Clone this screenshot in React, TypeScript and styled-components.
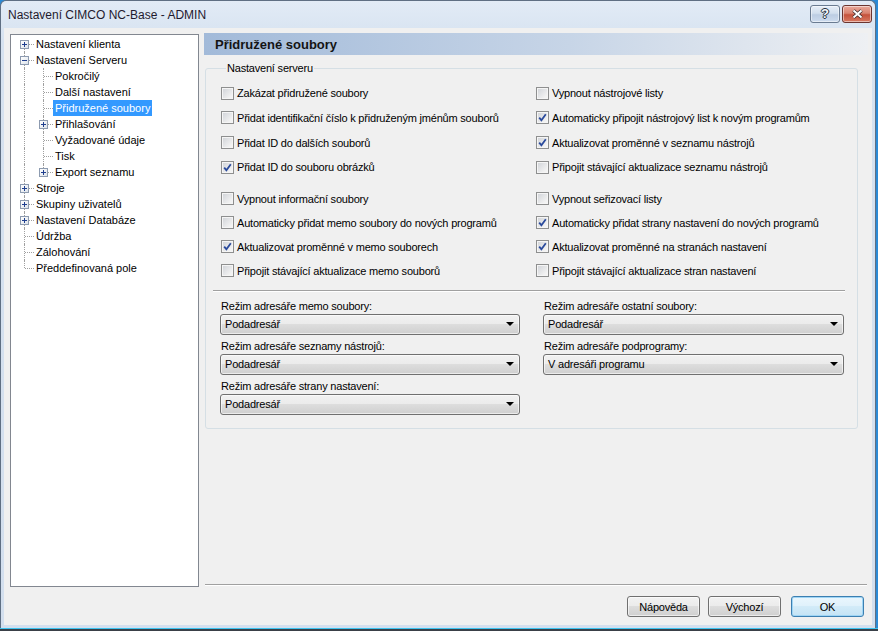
import React from 'react';
import styled, { createGlobalStyle, css } from 'styled-components';

const GlobalStyle = createGlobalStyle`
  html, body { margin: 0; padding: 0; }
  body {
    font-family: "Liberation Sans", Arial, sans-serif;
    font-size: 11px;
    background: #2b8ad6;
    overflow: hidden;
  }
`;

const Desktop = styled.div`
  width: 878px;
  height: 631px;
  display: flex;
  flex-direction: column;
`;

const Window = styled.div`
  width: 876px;
  height: 628px;
  box-sizing: border-box;
  display: flex;
  flex-direction: column;
  background: linear-gradient(to bottom, #e2ebf6, #d6e2f0 40px, #d3dfee);
  border: 1px solid #5f6f83;
  border-bottom: none;
  border-radius: 6px 6px 0 0;
  padding: 0 3px 3px 3px;
`;

const Taskbar = styled.div`
  height: 3px;
  width: 878px;
  box-sizing: border-box;
  border-top: 1px solid #3cc3ef;
  background: #3a4048;
`;

const TitleBar = styled.div`
  height: 27px;
  display: flex;
  align-items: center;
  padding-left: 4px;
  font-size: 12px;
  color: #1f1a2e;
`;

const TitleText = styled.div`
  flex: 1;
`;

const CaptionButton = styled.div<{ $close?: boolean }>`
  width: 30px;
  height: 18px;
  box-sizing: border-box;
  border: 1px solid ${p => (p.$close ? '#6b3530' : '#6a7b91')};
  border-radius: 3px;
  display: flex;
  align-items: center;
  justify-content: center;
  margin-left: 2px;
  margin-top: -2px;
  box-shadow: inset 0 0 0 1px rgba(255, 255, 255, 0.5);
  background: ${p =>
    p.$close
      ? 'linear-gradient(to bottom, #e9a99b 0%, #d98370 45%, #c5523c 55%, #d77a62 100%)'
      : 'linear-gradient(to bottom, #e6eef8 0%, #d2dfee 45%, #bccde3 55%, #cddbee 100%)'};
  font-weight: bold;
  font-size: 13px;
  color: #f7f9fc;
  text-shadow: 0 0 1px #2a3340, 1px 0 0 #2a3340, -1px 0 0 #2a3340, 0 1px 0 #2a3340, 0 -1px 0 #2a3340;
`;

const Body = styled.div`
  flex: 1;
  display: flex;
  background: #f0f0f0;
  padding: 5px 4px 8px 6px;
  gap: 5px;
  min-height: 0;
`;

const Tree = styled.div`
  width: 189px;
  box-sizing: border-box;
  margin-top: 1px;
  margin-bottom: 30px;
  background: #fff;
  border: 1px solid #828790;
  padding: 1px 0 0 4px;
  color: #000;
`;

const TreeRow = styled.div`
  display: flex;
  height: 16px;
  align-items: center;
`;

type VLine = 'full' | 'top' | 'bottom' | 'none';

const TreeCell = styled.div<{ $v: VLine; $h?: boolean }>`
  position: relative;
  width: 19px;
  height: 16px;
  flex: none;
  ${p =>
    p.$v !== 'none' &&
    css`
      &::before {
        content: '';
        position: absolute;
        left: 9px;
        top: ${p.$v === 'bottom' ? '8px' : '0'};
        height: ${p.$v === 'full' ? '16px' : '8px'};
        border-left: 1px dotted #a0a0a0;
      }
    `}
  ${p =>
    p.$h &&
    css`
      &::after {
        content: '';
        position: absolute;
        left: 10px;
        top: 8px;
        width: 9px;
        border-top: 1px dotted #a0a0a0;
      }
    `}
`;

const Expander = styled.div`
  position: absolute;
  left: 5px;
  top: 4px;
  width: 9px;
  height: 9px;
  box-sizing: border-box;
  border: 1px solid #8d9bb0;
  background: linear-gradient(135deg, #ffffff, #dde3ea);
  z-index: 1;
  display: flex;
  align-items: center;
  justify-content: center;
`;

const TreeLabel = styled.span<{ $selected?: boolean }>`
  line-height: 16px;
  padding: 0 2px;
  white-space: nowrap;
  ${p =>
    p.$selected &&
    css`
      background: #3399ff;
      color: #fff;
    `}
`;

const RightColumn = styled.div`
  flex: 1;
  display: flex;
  flex-direction: column;
  min-width: 0;
  letter-spacing: -0.2px;
`;

const Header = styled.div`
  height: 22px;
  display: flex;
  align-items: center;
  padding-left: 11px;
  background: linear-gradient(to right, #a2bad9, #c7d5e7 55%, #eef0f3);
  font-weight: bold;
  font-size: 13px;
  letter-spacing: 0;
  color: #141414;
`;

const Group = styled.fieldset`
  margin: 7px 10px 0 1px;
  padding: 6px 12px 13px 15px;
  border: 1px solid #d5dfe5;
  border-radius: 3px;
  min-width: 0;
`;

const Legend = styled.legend`
  padding: 0 1px;
  margin-left: 5px;
  line-height: 13px;
  color: #000;
`;

const CheckSection = styled.div<{ $rowH: number; $top: number }>`
  display: grid;
  grid-template-columns: 315px 1fr;
  grid-auto-rows: ${p => p.$rowH}px;
  margin-top: ${p => p.$top}px;
`;

const CheckItem = styled.label`
  display: flex;
  align-items: center;
  gap: 3px;
  white-space: nowrap;
  color: #000;
`;

const Box = styled.span`
  width: 13px;
  height: 13px;
  box-sizing: border-box;
  flex: none;
  border: 1px solid #8e8f8f;
  background: linear-gradient(135deg, #cfd2d7, #f3f3f3 80%);
  box-shadow: inset 0 0 0 1px #f5f5f5;
  display: flex;
  align-items: center;
  justify-content: center;
`;

const Separator = styled.div`
  height: 1px;
  background: #a0a0a0;
  border-bottom: 1px solid #fff;
`;

const GroupSeparator = styled(Separator)`
  margin: 7px 0 0 -8px;
`;

const FieldGrid = styled.div`
  display: grid;
  grid-template-columns: 300px 301px;
  column-gap: 23px;
  margin: 8px 0 0 -1px;
`;

const FieldColumn = styled.div`
  display: flex;
  flex-direction: column;
  gap: 5px;
`;

const Field = styled.div`
  display: flex;
  flex-direction: column;
  gap: 1px;
`;

const FieldLabel = styled.div`
  line-height: 13px;
  padding-left: 1px;
  color: #000;
`;

const buttonFace = css`
  box-sizing: border-box;
  border: 1px solid #707070;
  border-radius: 3px;
  background: linear-gradient(to bottom, #f2f2f2 0%, #ebebeb 49%, #dddddd 50%, #cfcfcf 100%);
  box-shadow: inset 0 0 0 1px rgba(255, 255, 255, 0.6);
`;

const Select = styled.div`
  ${buttonFace};
  height: 21px;
  display: flex;
  align-items: center;
  justify-content: space-between;
  padding: 0 5px 0 4px;
  color: #000;
`;

const Arrow = styled.span`
  width: 0;
  height: 0;
  border-left: 4px solid transparent;
  border-right: 4px solid transparent;
  border-top: 4px solid #000;
`;

const Spacer = styled.div`
  flex: 1;
`;

const BottomSeparator = styled(Separator)`
  margin: 0 1px;
`;

const ButtonRow = styled.div`
  display: flex;
  justify-content: flex-end;
  gap: 8px;
  margin: 10px 4px 0 0;
`;

const Button = styled.div<{ $default?: boolean }>`
  ${buttonFace};
  width: 73px;
  height: 21px;
  display: flex;
  align-items: center;
  justify-content: center;
  color: #000;
  ${p =>
    p.$default &&
    css`
      margin-left: 2px;
      border-color: #3c7fb1;
      background: linear-gradient(to bottom, #eaf6fd 0%, #dff1fb 49%, #d2ebf8 50%, #c4e3f5 100%);
      box-shadow: inset 0 0 0 1px #9fd5f5;
    `}
`;

type Node = {
  label: string;
  cells: { v: VLine; h?: boolean; exp?: 'plus' | 'minus' }[];
  selected?: boolean;
};

const tree: Node[] = [
  { label: 'Nastavení klienta', cells: [{ v: 'bottom', h: true, exp: 'plus' }] },
  { label: 'Nastavení Serveru', cells: [{ v: 'full', h: true, exp: 'minus' }] },
  { label: 'Pokročilý', cells: [{ v: 'full' }, { v: 'full', h: true }] },
  { label: 'Další nastavení', cells: [{ v: 'full' }, { v: 'full', h: true }] },
  { label: 'Přidružené soubory', cells: [{ v: 'full' }, { v: 'full', h: true }], selected: true },
  { label: 'Přihlašování', cells: [{ v: 'full' }, { v: 'full', h: true, exp: 'plus' }] },
  { label: 'Vyžadované údaje', cells: [{ v: 'full' }, { v: 'full', h: true }] },
  { label: 'Tisk', cells: [{ v: 'full' }, { v: 'full', h: true }] },
  { label: 'Export seznamu', cells: [{ v: 'full' }, { v: 'top', h: true, exp: 'plus' }] },
  { label: 'Stroje', cells: [{ v: 'full', h: true, exp: 'plus' }] },
  { label: 'Skupiny uživatelů', cells: [{ v: 'full', h: true, exp: 'plus' }] },
  { label: 'Nastavení Databáze', cells: [{ v: 'full', h: true, exp: 'plus' }] },
  { label: 'Údržba', cells: [{ v: 'full', h: true }] },
  { label: 'Zálohování', cells: [{ v: 'full', h: true }] },
  { label: 'Předdefinovaná pole', cells: [{ v: 'top', h: true }] },
];

const checksTop: [string, boolean][] = [
  ['Zakázat přidružené soubory', false],
  ['Vypnout nástrojové listy', false],
  ['Přidat identifikační číslo k přidruženým jménům souborů', false],
  ['Automaticky připojit nástrojový list k novým programům', true],
  ['Přidat ID do dalších souborů', false],
  ['Aktualizovat proměnné v seznamu nástrojů', true],
  ['Přidat ID do souboru obrázků', true],
  ['Připojit stávající aktualizace seznamu nástrojů', false],
];

const checksBottom: [string, boolean][] = [
  ['Vypnout informační soubory', false],
  ['Vypnout seřizovací listy', false],
  ['Automaticky přidat memo soubory do nových programů', false],
  ['Automaticky přidat strany nastavení do nových programů', true],
  ['Aktualizovat proměnné v memo souborech', true],
  ['Aktualizovat proměnné na stranách nastavení', true],
  ['Připojit stávající aktualizace memo souborů', false],
  ['Připojit stávající aktualizace stran nastavení', false],
];

const ExpanderIcon = ({ type }: { type: 'plus' | 'minus' }) => (
  <svg width="5" height="5" viewBox="0 0 5 5">
    <rect x="0" y="2" width="5" height="1" fill="#1f3f8f" />
    {type === 'plus' && <rect x="2" y="0" width="1" height="5" fill="#1f3f8f" />}
  </svg>
);

const CheckMark = () => (
  <svg width="9" height="9" viewBox="0 0 9 9">
    <path d="M1.2 4.6 L3.4 7.2 L7.8 1.2" fill="none" stroke="#2a4a9c" strokeWidth="1.8" />
  </svg>
);

const Checkbox = ({ label, checked }: { label: string; checked: boolean }) => (
  <CheckItem>
    <Box>{checked && <CheckMark />}</Box>
    {label}
  </CheckItem>
);

const Combo = ({ label, value }: { label: string; value: string }) => (
  <Field>
    <FieldLabel>{label}</FieldLabel>
    <Select>
      <span>{value}</span>
      <Arrow />
    </Select>
  </Field>
);

export default function App() {
  return (
    <Desktop>
      <GlobalStyle />
      <Window>
        <TitleBar>
          <TitleText>Nastavení CIMCO NC-Base - ADMIN</TitleText>
          <CaptionButton>?</CaptionButton>
          <CaptionButton $close>
            <svg width="11" height="10" viewBox="0 0 11 10">
              <path d="M1.5 1.5 L9.5 8.5 M9.5 1.5 L1.5 8.5" stroke="#3a2a2a" strokeWidth="3.6" />
              <path d="M1.5 1.5 L9.5 8.5 M9.5 1.5 L1.5 8.5" stroke="#ffffff" strokeWidth="2" />
            </svg>
          </CaptionButton>
        </TitleBar>
        <Body>
          <Tree>
            {tree.map(node => (
              <TreeRow key={node.label}>
                {node.cells.map((c, i) => (
                  <TreeCell key={i} $v={c.v} $h={c.h}>
                    {c.exp && (
                      <Expander>
                        <ExpanderIcon type={c.exp} />
                      </Expander>
                    )}
                  </TreeCell>
                ))}
                <TreeLabel $selected={node.selected}>{node.label}</TreeLabel>
              </TreeRow>
            ))}
          </Tree>
          <RightColumn>
            <Header>Přidružené soubory</Header>
            <Group>
              <Legend>Nastavení serveru</Legend>
              <CheckSection $rowH={24.67} $top={0}>
                {checksTop.map(([l, c]) => (
                  <Checkbox key={l} label={l} checked={c} />
                ))}
              </CheckSection>
              <CheckSection $rowH={24} $top={7}>
                {checksBottom.map(([l, c]) => (
                  <Checkbox key={l} label={l} checked={c} />
                ))}
              </CheckSection>
              <GroupSeparator />
              <FieldGrid>
                <FieldColumn>
                  <Combo label="Režim adresáře memo soubory:" value="Podadresář" />
                  <Combo label="Režim adresáře seznamy nástrojů:" value="Podadresář" />
                  <Combo label="Režim adresáře strany nastavení:" value="Podadresář" />
                </FieldColumn>
                <FieldColumn>
                  <Combo label="Režim adresáře ostatní soubory:" value="Podadresář" />
                  <Combo label="Režim adresáře podprogramy:" value="V adresáři programu" />
                </FieldColumn>
              </FieldGrid>
            </Group>
            <Spacer />
            <BottomSeparator />
            <ButtonRow>
              <Button>Nápověda</Button>
              <Button>Výchozí</Button>
              <Button $default>OK</Button>
            </ButtonRow>
          </RightColumn>
        </Body>
      </Window>
      <Taskbar />
    </Desktop>
  );
}
